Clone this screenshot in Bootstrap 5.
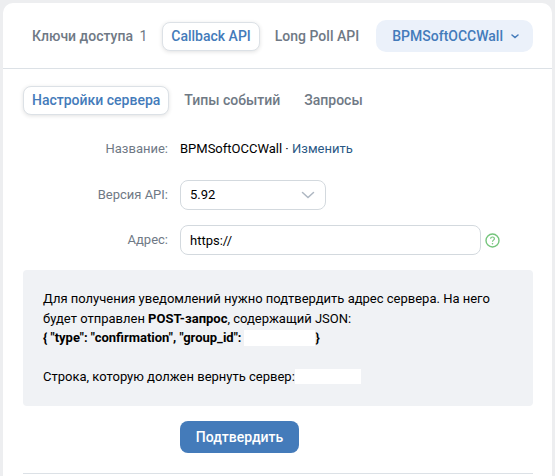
<!DOCTYPE html>
<html lang="ru">
<head>
<meta charset="utf-8">
<title>Callback API</title>
<link rel="stylesheet" href="https://cdn.jsdelivr.net/npm/bootstrap@5.3.0/dist/css/bootstrap.min.css">
<style>
html,body{height:476px;overflow:hidden}
body{background:#edeef0;font-family:Roboto,"Liberation Sans",sans-serif;font-size:13px;color:#000;padding:3px 3px 0}
.panel-box{background:#fff;border-radius:10px 10px 0 0;height:473px;overflow:hidden}
.top-bar{height:66px;border-bottom:1px solid #dce1e6;padding:17px 19px 0 20px}
.tab-row-top{gap:6px;padding-top:2px}
.tab-row-sub{gap:6px}
.tab-item{height:29px;padding:0 8px;border:1px solid transparent;border-radius:8px;color:#6f7985;font-weight:500;font-size:14px;line-height:27px;text-decoration:none;white-space:nowrap}
.tab-item.is-on{background:#fff;border-color:#dce1e6;box-shadow:0 1px 4px rgba(0,0,0,.12);color:#447bba}
.tab-count{margin-left:3px;font-weight:400}
.owner-btn{height:32px;margin-left:auto;padding:0 14px 0 16px;border-radius:10px;background:#ebf1fa;color:#447bba;font-weight:500;font-size:14px;line-height:32px;white-space:nowrap}
.sub-bar{padding:17px 0 0 20px}
.form-area{padding:0 19px 0 20px}
.field-row{display:flex;align-items:center}
.field-label{width:157px;padding-right:12px;text-align:right;color:#6f7985;flex:none;margin:0}
.field-name{margin-top:19px;height:30px}
.field-ver{margin-top:16px;height:30px}
.field-addr{margin-top:15px;height:30px}
.val-link{color:#2a5885;text-decoration:none}
.soft-sel{width:146px;height:30px;border:1px solid #d3d9de;border-radius:8px;padding:0 10px 0 9px;display:flex;align-items:center;justify-content:space-between;font-size:13px}
.soft-input{width:301px;height:30px;border:1px solid #d3d9de;border-radius:8px;padding:0 9px;font-size:13px;color:#000;outline:0;font-family:inherit;box-shadow:none}
.help-ico{margin-left:4px;flex:none}
.note-box{margin-top:15px;background:#f0f2f5;border-radius:4px;padding:19px 20px;height:136px;line-height:19.5px}
.mask-a{display:inline-block;width:71px;height:16px;background:#fff;vertical-align:-4px;margin-left:3px}
.mask-b{display:inline-block;width:66px;height:15px;background:#fff;vertical-align:-3px}
.send-btn{margin:15px 0 0 157px;width:119px;height:32px;border:0;border-radius:8px;background:#447bba;color:#fff;font-weight:500;font-size:14px;padding:0}
.end-line{margin-top:20px;border-top:1px solid #dce1e6}
</style>
</head>
<body>
<div class="panel-box">
  <div class="top-bar d-flex align-items-start">
    <div class="tab-row-top d-flex align-items-center">
      <a class="tab-item" href="#">Ключи доступа <span class="tab-count">1</span></a>
      <a class="tab-item is-on" href="#">Callback API</a>
      <a class="tab-item" href="#">Long Poll API</a>
    </div>
    <div class="owner-btn d-flex align-items-center gap-2">BPMSoftOCCWall
      <svg width="8" height="5" viewBox="0 0 8 5" aria-hidden="true"><path d="M1 1l3 2.6L7 1" fill="none" stroke="#447bba" stroke-width="1.5" stroke-linecap="round"/></svg>
    </div>
  </div>
  <div class="sub-bar tab-row-sub d-flex align-items-center">
    <a class="tab-item is-on" href="#">Настройки сервера</a>
    <a class="tab-item" href="#">Типы событий</a>
    <a class="tab-item" href="#">Запросы</a>
  </div>
  <div class="form-area">
    <div class="field-row field-name">
      <div class="field-label">Название:</div>
      <div>BPMSoftOCCWall · <a class="val-link" href="#">Изменить</a></div>
    </div>
    <div class="field-row field-ver">
      <div class="field-label">Версия API:</div>
      <div class="soft-sel"><span>5.92</span>
        <svg width="14" height="8" viewBox="0 0 14 8" aria-hidden="true"><path d="M1.5 1.5L7 6.5l5.5-5" fill="none" stroke="#aeb7c2" stroke-width="1.5" stroke-linecap="round"/></svg>
      </div>
    </div>
    <div class="field-row field-addr">
      <label class="field-label" for="addr">Адрес:</label>
      <input id="addr" class="soft-input" type="text" value="https://">
      <svg class="help-ico" width="15" height="15" viewBox="0 0 15 15" aria-hidden="true"><circle cx="7.5" cy="7.5" r="6.5" fill="none" stroke="#75c57c" stroke-width="1.4"/><path d="M5.6 5.8c0-1.1.9-1.8 1.9-1.8s1.9.7 1.9 1.7c0 1.4-1.9 1.5-1.9 3" fill="none" stroke="#75c57c" stroke-width="1.2"/><circle cx="7.5" cy="10.8" r=".8" fill="#75c57c"/></svg>
    </div>
    <div class="note-box">
      Для получения уведомлений нужно подтвердить адрес сервера. На него<br>
      будет отправлен <b>POST-запрос</b>, содержащий JSON:<br>
      <b>{ "type": "confirmation", "group_id":<span class="mask-a"></span>}</b><br><br>
      Строка, которую должен вернуть сервер:<span class="mask-b"></span>
    </div>
    <button class="send-btn btn" type="button">Подтвердить</button>
    <div class="end-line"></div>
  </div>
</div>
<script src="https://cdn.jsdelivr.net/npm/bootstrap@5.3.0/dist/js/bootstrap.bundle.min.js"></script>
</body>
</html>
